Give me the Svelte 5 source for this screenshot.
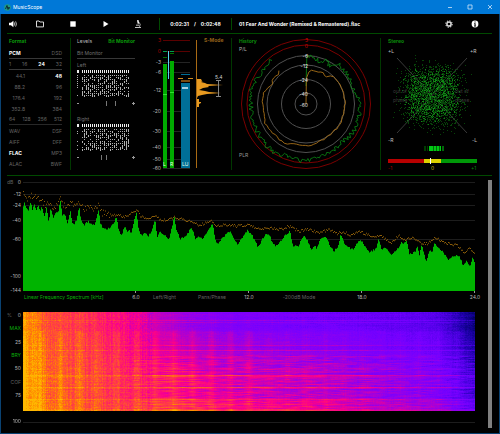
<script>
  import { onMount } from 'svelte';

  // Small seeded generator, so that every drawing is the same on each load.
  function seeded(seed) {
    let s = seed;
    return () => {
      s = (s * 1664525 + 1013904223) % 4294967296;
      return s / 4294967296;
    };
  }

  // Linear interpolation over a flat list x0, y0, x1, y1, ...
  function at(list, x) {
    if (x <= list[0]) return list[1];
    for (let i = 2; i < list.length; i += 2) {
      if (x <= list[i]) {
        const t = (x - list[i - 2]) / (list[i] - list[i - 2] || 1);
        return list[i - 1] + t * (list[i + 1] - list[i - 1]);
      }
    }
    return list[list.length - 1];
  }

  const formatRows = [
    { kind: 'spread rule', items: ['PCM', 'DSD'], on: 'PCM' },
    { kind: 'spread rule', items: ['1', '16', '24', '32'], on: '24' },
    { kind: 'rates', items: ['44.1', '48'], on: '48' },
    { kind: 'rates', items: ['88.2', '96'] },
    { kind: 'rates', items: ['176.4', '192'] },
    { kind: 'rates', items: ['352.8', '384'] },
    { kind: 'spread rule thick', items: ['64', '128', '256', '512'] },
    { kind: 'spread', items: ['WAV', 'DSF'] },
    { kind: 'spread', items: ['AIFF', 'DFF'] },
    { kind: 'spread', items: ['FLAC', 'MP3'], on: 'FLAC' },
    { kind: 'spread', items: ['ALAC', 'BWF'] }
  ];

  function bitField(seed) {
    const r = seeded(seed);
    let heads = 'M0 1h2v3h-2z';
    let dots = '';
    for (let c = 0; c < 24; c++) {
      const x = 5 + c * 2;
      heads += `M${x} 1h1v3h-1z`;
      for (let y = 6; y < 28; y += 2) {
        if (r() > 0.3) dots += `M${x} ${y}h1v${r() > 0.6 ? 2 : 1}h-1z`;
      }
    }
    for (let y = 6; y < 28; y += 2) if (r() > 0.4) dots += `M0 ${y}h1v1h-1z`;
    return { heads, dots };
  }
  const monitors = [
    { name: 'Left', marks: [29, 38], ...bitField(7) },
    { name: 'Right', marks: [24, 29], ...bitField(91) }
  ];

  const meterScale = [
    ['3', 40], ['0', 51], ['-3', 62], ['-6', 72], ['-12', 90],
    ['-20', 111], ['-30', 131], ['-40', 147], ['-50', 159], ['-60', 168]
  ];

  // History: angle in degrees clockwise from the top, radius.
  const cx = 306;
  const cy = 104;
  function ring(list, from, to, step, jitter, seed) {
    const r = seeded(seed);
    let d = '';
    for (let a = from; a <= to; a += step) {
      const rad = at(list, a) + (r() - 0.5) * jitter;
      const t = (a * Math.PI) / 180;
      d += `L${(cx + rad * Math.sin(t)).toFixed(1)} ${(cy - rad * Math.cos(t)).toFixed(1)}`;
    }
    return d;
  }
  const peakRing = 'M306 86' + ring(
    [1, 48, 10, 47, 20, 44, 25, 49, 32, 44, 40, 51, 60, 50, 75, 50, 85, 54, 100, 54, 120, 55, 135, 52, 150, 54, 170, 55, 185, 57, 200, 55, 215, 58, 240, 56, 265, 55, 290, 57, 300, 54, 320, 56, 325, 58],
    1, 322, 1.5, 4.5, 5);
  const loudRing = 'M306 104' + ring(
    [1, 26, 6, 34, 12, 35, 20, 33, 25, 36, 36, 34, 45, 39, 80, 39, 110, 39, 140, 39, 165, 40, 180, 42, 195, 41, 208, 45, 225, 44, 245, 45, 262, 43, 285, 44, 300, 39, 305, 42, 315, 40, 322, 44],
    1, 322, 4, 1.6, 11);
  const historyScale = [['3', 40], ['0', 46], ['-6', 56], ['-12', 66], ['-24', 80], ['-40', 94], ['-60', 105]];

  function scatter(count, side, blur, seed) {
    const r = seeded(seed);
    const offset = () => (r() - 0.5) * side + (r() + r() + r() - 1.5) * blur;
    let d = '';
    for (let i = 0; i < count; i++) {
      d += `M${Math.round(432 + offset())} ${Math.round(95 + offset())}h1v1h-1z`;
    }
    return d;
  }
  const cloudDim = scatter(2300, 42, 16, 3);
  const cloudBright = scatter(420, 40, 10, 17);

  // Spectrum curves, in thirds of a chart unit, by frequency section.
  const levels = [
    [0, [68, 125, 72, 82, 78, 100, 86, 108, 92, 84, 98, 108, 103, 90, 108, 110, 115, 95, 120, 112, 125, 100, 134, 128, 140, 95, 146, 145, 152, 105, 160, 130, 168, 115, 174, 118, 181, 80, 188, 125, 195, 120, 202, 146, 207, 135, 211, 108, 216, 145, 222, 150, 230, 140, 238, 98, 243, 140, 252, 155, 266, 140, 272, 152, 285, 152, 290, 130, 296, 105, 302, 150, 312, 165, 330, 162, 340, 150, 350, 128, 356, 165, 364, 186, 374, 158, 382, 172, 388, 168, 394, 180, 403, 140, 410, 112, 416, 165, 424, 185, 436, 175, 445, 188, 455, 170, 462, 145, 466, 138, 472, 190, 480, 172, 490, 180]],
    [495, [0, 185, 12, 198, 20, 165, 28, 128, 34, 165, 46, 195, 60, 190, 70, 175, 80, 160, 92, 195, 105, 188, 115, 195, 130, 165, 143, 150, 152, 200, 158, 210, 170, 195, 185, 180, 195, 172, 208, 198, 218, 212, 230, 195, 248, 168, 262, 185, 280, 220, 290, 200, 300, 182, 312, 178, 320, 200, 332, 218, 345, 205, 360, 185, 375, 172, 384, 215, 400, 218, 408, 200, 418, 183, 430, 205, 440, 230, 448, 215, 455, 222, 470, 190, 485, 190, 493, 210]],
    [990, [0, 215, 12, 232, 26, 215, 32, 180, 42, 205, 55, 220, 72, 228, 80, 210, 92, 198, 104, 215, 118, 235, 138, 225, 146, 195, 155, 225, 165, 220, 185, 242, 205, 222, 215, 205, 222, 210, 230, 200, 238, 240, 255, 235, 262, 215, 268, 245, 276, 212, 288, 262, 300, 230, 306, 235, 314, 210, 325, 220, 340, 235, 355, 258, 372, 245, 388, 245, 400, 275, 410, 262, 420, 280, 428, 250, 436, 272]]
  ];
  const peaks = [
    [0, [72, 55, 80, 75, 90, 65, 105, 62, 120, 78, 135, 90, 145, 80, 158, 98, 170, 90, 181, 72, 190, 95, 205, 90, 215, 85, 225, 100, 238, 85, 250, 105, 265, 100, 280, 102, 296, 92, 305, 115, 330, 122, 350, 120, 370, 128, 390, 118, 410, 105, 420, 125, 440, 132, 465, 125, 480, 135]],
    [495, [0, 138, 28, 128, 70, 140, 100, 152, 140, 140, 150, 155, 180, 150, 215, 155, 250, 150, 280, 165, 320, 160, 350, 165, 370, 155, 400, 170, 430, 165, 460, 175, 490, 165]],
    [990, [0, 168, 20, 178, 40, 172, 60, 182, 90, 172, 120, 185, 150, 185, 185, 205, 205, 182, 220, 195, 245, 190, 270, 205, 290, 208, 315, 188, 340, 205, 360, 208, 380, 212, 400, 235, 415, 222, 435, 235]]
  ];
  const flatten = (sections) =>
    sections.flatMap(([start, list]) => list.map((n, i) => (i % 2 ? n / 3 + 174 : (n + start) / 3)));
  const levelLine = flatten(levels);
  const peakLine = flatten(peaks);

  const rs = seeded(23);
  let area = 'M23 291';
  for (let x = 23; x <= 474; x++) {
    const y = at(levelLine, x + 0.5) + (rs() - 0.5) * 2;
    area += `V${y.toFixed(1)}H${x + 1}`;
  }
  area += 'V291z';
  let peakDots = '';
  for (let x = 23; x <= 474; x++) {
    const spread = x < 110 ? 6 : 2.6;
    const y = at(peakLine, x) + (rs() - 0.5) * spread;
    peakDots += `M${x} ${y.toFixed(1)}h1v1h-1z`;
  }

  const gridLines = [182, 194, 205, 220, 239, 276];
  const spectrumScale = [['0', 182], ['-12', 194], ['-24', 205], ['-40', 220], ['-60', 239], ['-100', 276], ['-144', 290]];
  const ticks = [136, 249, 362, 475];

  // Spectrogram
  const heat = [
    [0, 0, 0, 100], [0.1, 30, 0, 170], [0.2, 80, 0, 230], [0.3, 115, 0, 255], [0.38, 135, 0, 245], [0.5, 190, 0, 195],
    [0.62, 250, 0, 140], [0.72, 255, 40, 90], [0.82, 255, 85, 45], [0.9, 255, 135, 0], [1, 255, 185, 0]
  ];
  function heatColour(v) {
    const c = Math.max(0, Math.min(1, v));
    for (let i = 1; i < heat.length; i++) {
      if (c <= heat[i][0]) {
        const a = heat[i - 1];
        const b = heat[i];
        const t = (c - a[0]) / (b[0] - a[0]);
        return [a[1] + t * (b[1] - a[1]), a[2] + t * (b[2] - a[2]), a[3] + t * (b[3] - a[3])];
      }
    }
    return heat[heat.length - 1].slice(1);
  }

  let canvas;
  onMount(() => {
    const w = canvas.width;
    const h = canvas.height;
    const ctx = canvas.getContext('2d');
    const image = ctx.createImageData(w, h);
    const r = seeded(41);
    const base = [0, 0.92, 12, 0.88, 20, 0.8, 60, 0.74, 85, 0.68, 110, 0.6, 135, 0.5, 165, 0.41, 200, 0.35, 260, 0.31, 340, 0.27, 410, 0.22, 432, 0.13, 451, 0.03];
    const reach = [0, 0.25, 60, 0.25, 100, 0.4, 150, 1, 290, 1, 370, 0.75, 451, 0.7];
    const warmth = [0, 0, 14, 0.01, 22, 0.07, 40, 0.09, 44, 0.16, 61, 0.18, 63, 0.21, 85, 0.2, 87, 0.29, 98, 0.31];
    const lines = { 8: 0.1, 10: 0.05, 33: 0.08, 38: 0.1, 63: 0.12, 64: 0.1, 75: 0.13, 76: 0.08, 87: 0.1, 97: 0.08, 98: 0.1 };
    const columns = Array.from({ length: w }, () => (r() - 0.5) * 0.07);
    for (let y = 0; y < h; y++) {
      const rowShift = (r() - 0.5) * (y > 42 ? 0.08 : 0.03);
      const knots = Array.from({ length: 60 }, () => (r() - 0.5) * (y > 42 ? 0.15 : 0.04));
      for (let x = 0; x < w; x++) {
        const k = x / 8;
        const i = Math.floor(k);
        const smooth = knots[i] + (k - i) * (knots[i + 1] - knots[i]);
        const comb = Math.pow(Math.cos((Math.PI * (x - 37)) / 18.9), 6) * (y > 18 ? 0.06 : 0.01) * (x < 240 ? 1 : 0.4);
        const grain = (r() - 0.5) * (x < 130 ? 0.09 : 0.04);
        const cols = columns[x] * (x < 130 ? 1 : 0.3);
        const mul = at(reach, x);
        const line = lines[y] || 0;
        const v = at(base, x) + at(warmth, y) * mul + rowShift * mul + smooth * mul + comb + grain + cols + line * (x < 100 ? 0.5 : mul);
        const [cr, cg, cb] = heatColour(v);
        const p = (y * w + x) * 4;
        image.data[p] = cr;
        image.data[p + 1] = cg;
        image.data[p + 2] = cb;
        image.data[p + 3] = 255;
      }
    }
    ctx.putImageData(image, 0, 0);
  });

  const heatLabels = [
    ['0', ''], ['MAX', 'green'], ['25', ''], ['BRY', 'green'], ['50', ''], ['COF', 'dim'], ['75', '']
  ];
</script>

<div class="window">
  <header class="titlebar">
    <svg class="logo" viewBox="0 0 14 14" aria-hidden="true">
      <circle cx="7" cy="7" r="6.5" fill="#1f9a86" />
      <path d="M3 10 6 3 8 11 10 6 11 9" fill="none" stroke="#0c2f3a" stroke-width="2" />
    </svg>
    <h1>MusicScope</h1>
    <button aria-label="Minimize"><svg viewBox="0 0 6 6"><path d="M1 3.5h4" /></svg></button>
    <button aria-label="Maximize"><svg viewBox="0 0 6 6"><path d="M1 1h4v4h-4z" /></svg></button>
    <button aria-label="Close"><svg viewBox="0 0 6 6"><path d="M1 1l4 4M5 1l-4 4" /></svg></button>
  </header>

  <nav class="toolbar">
    <div class="transport">
      <button aria-label="Volume">
        <svg viewBox="0 0 8 8"><path d="M0 2.8h2L4.4.8v6.4L2 5.2H0z" fill="#fff" /><path d="M5.3 2.4q1 1.6 0 3.2M6.6 1.4q1.7 2.6 0 5.2" fill="none" stroke="#ddd" stroke-width=".8" /></svg>
      </button>
      <button aria-label="Open">
        <svg viewBox="0 0 8 8"><path d="M.5 6.9V1h2.6l.8 1h3.6v4.9z" fill="none" stroke="#d8d8d8" /></svg>
      </button>
      <button aria-label="Stop"><svg viewBox="0 0 8 8"><path d="M1.3 1.3h5.4v5.4H1.3z" fill="#fff" /></svg></button>
      <button aria-label="Play"><svg viewBox="0 0 8 8"><path d="M1.500 1l5 3-5 3z" fill="#fff" /></svg></button>
      <button aria-label="Analyse">
        <svg viewBox="0 0 8 8"><path d="M3 .3 4.5 0l.7 3.4-1.5.3zM1 7.8V6.9h6v.9zM2 4.7h3.2v.7H2z" fill="#fff" /><path d="M5 2.2q2.200 2 .5 4.7" fill="none" stroke="#ccc" stroke-width=".8" /></svg>
      </button>
    </div>
    <div class="clock"><span>0:02:31</span><span>/</span><span>0:02:48</span></div>
    <p class="track">01 Fear And Wonder (Remixed &amp; Remastered).flac</p>
    <button class="tool" aria-label="Settings">
      <svg viewBox="0 0 8 8"><circle cx="4" cy="4" r="2.1" fill="none" stroke="#ddd" stroke-width="1.5" /><circle cx="4" cy="4" r="3.2" fill="none" stroke="#ccc" stroke-width="1.1" stroke-dasharray="1.3 1.2" /></svg>
    </button>
    <button class="tool" aria-label="Information">
      <svg viewBox="0 0 8 8"><circle cx="4" cy="4" r="3.4" fill="#fff" /><path d="M3.5 1.4h1.1v1H3.5zM3.1 3.3h1.5v2.4h.5v.7H3v-.7h.5V4h-.4z" fill="#000" /></svg>
    </button>
  </nav>

  <main>
    <div class="panels">
      <section class="format">
        <h2>Format</h2>
        {#each formatRows as row}
          <div class="row {row.kind}">
            {#each row.items as item}
              <button class:on={row.on === item}>{item}</button>
            {/each}
          </div>
        {/each}
      </section>

      <section class="levels">
        <div class="monitor">
          <div class="tabs">
            <button class="tab">Levels</button>
            <button class="tab active">Bit Monitor</button>
          </div>
          <h3 class="rule">Bit Monitor</h3>
          {#each monitors as m}
            <div class="channel">
              <h3>{m.name}</h3>
              <svg viewBox="0 0 58 44" shape-rendering="crispEdges" aria-hidden="true">
                <path d={m.heads} fill="#f0f0f0" />
                <path d={m.dots} fill="#b0b0b0" />
                <path d="M0 34h2v1h-2zM55 34h3v1h-3zM56 33h1v3h-1z" fill="#999" />
                {#each m.marks as x}<path d="M{x} 32h1v5h-1z" fill="#777" />{/each}
              </svg>
            </div>
          {/each}
        </div>
        <svg class="meter" viewBox="151 38 80 132" role="img" aria-label="Level meters">
          {#each meterScale as [label, y], i}
            <path d="M163 {y}h27v1h-27z" fill={i < 2 ? '#5a0000' : '#242424'} />
            <text x="161" y={y + 2} text-anchor="end" fill={i < 2 ? '#b00000' : '#b8b8b8'}>{label}</text>
          {/each}
          <path d="M163 64h4v104h-4zM170 61h4v107h-4z" fill="#00aa00" />
          <path d="M163 94h4v1h-4zM170 92h4v1h-4z" fill="#30e030" />
          <path d="M163 51h4v1h-4zM170 51h4v1h-4z" fill="#00a050" />
          <path d="M163 57h4v1h-4zM170 53h4v1h-4z" fill="#007000" />
          <path d="M168 51h1v28h-1z" fill="#58d0f0" />
          <path d="M181 83h9v85h-9zM181 74h9v1h-9z" fill="#006f98" />
          <path d="M181 80h9v2h-9z" fill="#7a4a10" />
          <path d="M178 78h5v1h-5zM188 78h5v1h-5z" fill="#d08a20" />
          <path d="M182 87h6v2h-6z" fill="#a8d0e0" />
          <g fill="#e8ffe8"><text x="163" y="166">L</text><text x="170" y="166">R</text><text x="182" y="166">LU</text></g>
          <path d="M196 40h1v128h-1z" fill="#a86a14" />
          <path d="M197 79h4l1 2h1l-2 1 4 1 2 1 16 1-15 1 1 1-6 1-4 2 6 1 4 1 12 1-14 1-5 1-4 1-1 2zM197 99h2v3h2v1l-2 1v3h-2z" fill="#e89a20" />
          <text class="b" x="204" y="42" fill="#94601a">S-Mode</text>
          <text x="215" y="79" fill="#d0d0d0">5.4</text>
          <path d="M216 80.500h5M218.500 80v16M216 96.500h5" stroke="#888" fill="none" />
        </svg>
      </section>

      <section>
        <svg viewBox="232 38 148 132" role="img" aria-label="History">
          <g fill="none" stroke="#505050">
            <circle {cx} {cy} r="48.500" /><circle {cx} {cy} r="39" /><circle {cx} {cy} r="24.500" /><circle {cx} {cy} r="11" />
          </g>
          <g fill="none" stroke="#7c0000"><circle {cx} {cy} r="64.500" /><circle {cx} {cy} r="59" /></g>
          <path d={peakRing} fill="none" stroke="#0a8a14" stroke-width=".8" />
          <path d={loudRing} fill="none" stroke="#a87018" stroke-width=".9" />
          {#each historyScale as [label, y], i}
            <text x="308" y={y + 2} text-anchor="end" fill={i < 2 ? '#d00000' : '#e0e0e0'}>{label}</text>
          {/each}
          <text class="b" x="239" y="43" fill="#0a8a0a">History</text>
          <text x="239" y="51" fill="#b0b0b0">P/L</text>
          <text x="239" y="157" fill="#989898">PLR</text>
        </svg>
      </section>

      <section>
        <svg viewBox="381 38 110 132" role="img" aria-label="Stereo">
          <path d="M397 58l70 75M467 58l-70 75" stroke="#3a3a3a" fill="none" />
          <path d={cloudDim} fill="#0a5a0c" fill-opacity=".75" />
          <path d={cloudBright} fill="#12a018" fill-opacity=".8" />
          <g fill="#3a3a3a">
            <text x="393" y="93">out of</text><text x="393" y="102">phase</text>
            <text x="455" y="93">out of</text><text x="455" y="102">phase</text>
          </g>
          <text class="b" x="388" y="43" fill="#0a8a0a">Stereo</text>
          <g fill="#c0c0c0">
            <text x="388" y="53">+L</text><text x="470" y="53">+R</text>
            <text x="388" y="142">-R</text><text x="472" y="142">-L</text>
          </g>
          <path d="M424 146h2v5h-2zM427 146h1v5h-1z" fill="#003c00" />
          <path d="M429 146h12v5h-12z" fill="#00c814" />
          <path d="M433 146h1v5h-1zM436 146h1v5h-1zM439 146h1v5h-1zM442 146h2v5h-2z" fill="#006a08" />
          <path d="M388 159h36v4h-36z" fill="#b80000" />
          <path d="M424 159h17v4h-17z" fill="#dcd000" />
          <path d="M441 159h36v4h-36z" fill="#009808" />
          <path d="M430 158h1v6h-1z" fill="#fff" />
          <text x="388" y="170" fill="#a80000">-1</text>
          <text x="431" y="170" fill="#c8b800">0</text>
          <text x="471" y="170" fill="#008a08">+1</text>
        </svg>
      </section>
    </div>

    <div class="lower">
      <div class="charts">
        <svg viewBox="7 176 478 118" role="img" aria-label="Linear frequency spectrum">
          {#each gridLines as y}<path d="M23 {y}h452v1h-452z" fill="#1d1d1d" />{/each}
          <path d={area} fill="#00b400" />
          <path d={peakDots} fill="#8a5c08" />
          {#each ticks as x}<path d="M{x - 1} 291h1v2h-1z" fill="#999" />{/each}
          <text x="7" y="184" fill="#606060">dB</text>
          {#each spectrumScale as [label, y]}
            <text x="21" y={y + 2} text-anchor="end" fill="#b8b8b8">{label}</text>
          {/each}
        </svg>
        <div class="modes">
          <button class="first">Linear Frequency Spectrum [kHz]</button>
          <span>6.0</span>
          <button>Left/Right</button>
          <button>Pans/Phase</button>
          <span>12.0</span>
          <button>-200dB Mode</button>
          <span>18.0</span>
          <span class="last">24.0</span>
        </div>
        <div class="spectrogram">
          <div class="axis">
            {#each heatLabels as [label, tone], i}
              <div>
                {#if i === 0}<span class="dim unit">%</span>{/if}
                {#if tone}<button class={tone}>{label}</button>{:else}<span>{label}</span>{/if}
              </div>
            {/each}
          </div>
          <canvas bind:this={canvas} width="452" height="99" aria-label="Spectrogram"></canvas>
          <div class="end">100</div>
          <div class="baseline"></div>
        </div>
      </div>
      <div class="scroll"></div>
    </div>
  </main>
</div>

<style>
  :global(body) {
    margin: 0;
    background: #000;
  }
  .window {
    box-sizing: border-box;
    min-height: 100vh;
    border: solid #0a4272;
    border-width: 0 1px 1px;
    background: #000;
    color: #b8b8b8;
    font: 5px/6px Inter, "Liberation Sans", sans-serif;
  }
  h1, h2, h3, p {
    margin: 0;
    font: inherit;
  }
  button {
    margin: 0;
    padding: 0;
    border: 0;
    background: none;
    color: inherit;
    font: inherit;
    text-align: left;
    white-space: nowrap;
  }
  svg {
    display: block;
    width: 100%;
  }
  text {
    font-size: 5px;
  }
  .b {
    font-weight: 700;
  }
  .titlebar {
    display: flex;
    align-items: center;
    height: 14px;
    margin: 0 -1px;
    padding: 0 0 0 4px;
    background: #0078d7;
    color: #fff;
  }
  .logo {
    width: 7px;
  }
  h1 {
    flex: 1;
    padding-left: 2px;
  }
  .titlebar button {
    width: 20px;
  }
  .titlebar button svg {
    width: 6px;
    margin: 0 auto;
    fill: none;
    stroke: #cfe5f8;
    stroke-width: 0.8;
  }
  .toolbar {
    display: flex;
    align-items: center;
    height: 19px;
    margin: 0 7px 0 6px;
    border-bottom: 1px solid #004a00;
    color: #fff;
    font-weight: 700;
  }
  .toolbar svg {
    width: 8px;
    margin: 0 auto;
  }
  .transport {
    display: grid;
    grid-template-columns: 17px 32px 33px 33px 32px;
    margin-right: 5px;
  }
  .transport button:first-child {
    width: 12px;
  }
  .clock {
    display: flex;
    justify-content: center;
    gap: 5px;
    width: 71px;
    padding: 3px 0;
    border: solid #004a00;
    border-width: 0 1px;
  }
  .track {
    flex: 1;
    padding-left: 7px;
  }
  .tool {
    width: 26px;
  }
  .tool:last-child {
    margin-right: 4px;
  }
  .panels {
    display: grid;
    grid-template-columns: 64fr 161fr 149fr 111fr;
    margin: 0 7px 0 6px;
    padding: 4px 0 5px;
    border-bottom: 1px solid #004a00;
  }
  .panels section {
    border-right: 1px solid #003800;
  }
  .panels section:last-child {
    padding-right: 1px;
    border-right: 0;
  }
  .format {
    padding: 0 8px 0 2px;
  }
  h2 {
    height: 10px;
    color: #0a9a0a;
    font-weight: 700;
  }
  .row {
    display: flex;
    justify-content: space-between;
    align-items: center;
    box-sizing: border-box;
    height: 11px;
    color: #646464;
  }
  .rule {
    border-bottom: 1px solid #383838;
  }
  .thick {
    border-color: #282828;
  }
  .rates button:first-child {
    width: 16px;
    text-align: right;
  }
  .row .on {
    color: #fff;
    font-weight: 700;
  }
  .levels {
    display: flex;
    padding-left: 6px;
  }
  .monitor {
    flex: 58;
  }
  .tabs {
    display: flex;
    justify-content: space-between;
    height: 12px;
    align-items: flex-start;
  }
  .tab.active {
    color: #0a9a0a;
    font-weight: 700;
  }
  h3 {
    color: #707070;
  }
  h3.rule {
    padding-bottom: 2px;
    margin-bottom: 3px;
  }
  .channel {
    height: 54px;
  }
  .channel svg {
    margin-top: 1px;
  }
  .meter {
    flex: 80;
    width: auto;
    margin-left: 16px;
  }
  .lower {
    display: flex;
    padding: 0 7px 5px 6px;
    gap: 3px;
  }
  .charts {
    flex: 1;
  }
  .scroll {
    width: 4px;
    margin-top: 4px;
    background: #808080;
  }
  .modes {
    display: grid;
    grid-template-columns: 104fr 16fr 41fr 54fr 20fr 80fr 46fr 80fr 20fr;
    margin-left: 17px;
    color: #646464;
  }
  .modes > * {
    text-align: center;
  }
  .modes .first {
    color: #0ab00a;
    text-align: left;
  }
  .modes span {
    color: #b8b8b8;
  }
  .modes .last {
    grid-column: 9;
  }
  .spectrogram {
    display: grid;
    grid-template-columns: 14px 1fr;
    column-gap: 2px;
    margin-right: 10px;
    padding-top: 12px;
  }
  .axis {
    display: flex;
    flex-direction: column;
    justify-content: space-between;
    height: 86px;
    text-align: right;
  }
  .axis div {
    display: flex;
    justify-content: flex-end;
  }
  .unit {
    flex: 1;
    text-align: left;
  }
  .green {
    color: #0ab00a;
  }
  .dim {
    color: #606060;
  }
  canvas {
    display: block;
    width: 100%;
  }
  .end {
    padding: 7px 0 4px;
    text-align: right;
  }
  .baseline {
    height: 1px;
    margin-top: 11px;
    background: #1d1d1d;
  }
</style>
